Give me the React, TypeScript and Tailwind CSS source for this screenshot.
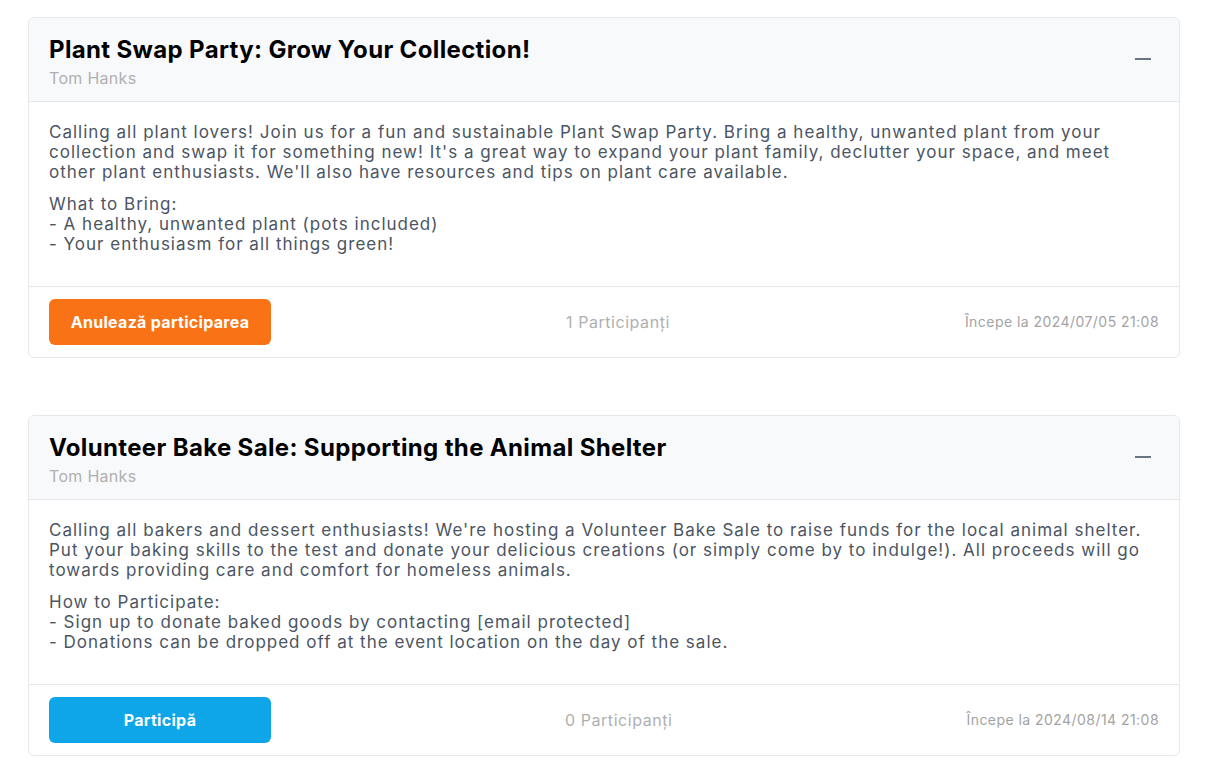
const events = [
  {
    title: "Plant Swap Party: Grow Your Collection!",
    author: "Tom Hanks",
    paragraphs: [
      [
        "Calling all plant lovers! Join us for a fun and sustainable Plant Swap Party. Bring a healthy, unwanted plant from your collection and swap it for something new! It's a great way to expand your plant family, declutter your space, and meet other plant enthusiasts. We'll also have resources and tips on plant care available.",
      ],
      ["What to Bring:", "- A healthy, unwanted plant (pots included)", "- Your enthusiasm for all things green!"],
    ],
    joined: true,
    participants: 1,
    starts: "2024/07/05 21:08",
  },
  {
    title: "Volunteer Bake Sale: Supporting the Animal Shelter",
    author: "Tom Hanks",
    paragraphs: [
      [
        "Calling all bakers and dessert enthusiasts! We're hosting a Volunteer Bake Sale to raise funds for the local animal shelter. Put your baking skills to the test and donate your delicious creations (or simply come by to indulge!). All proceeds will go towards providing care and comfort for homeless animals.",
      ],
      [
        "How to Participate:",
        "- Sign up to donate baked goods by contacting [email protected]",
        "- Donations can be dropped off at the event location on the day of the sale.",
      ],
    ],
    joined: false,
    participants: 0,
    starts: "2024/08/14 21:08",
  },
];

export default function App() {
  return (
    <div className="min-h-screen bg-white px-7 pt-[17px] font-['Inter',sans-serif]">
      <div className="flex flex-col gap-[57px]">
        {events.map((ev) => (
          <div key={ev.title} className="rounded-md border border-[#e5e7eb] bg-white overflow-hidden">
            {/* header */}
            <div className="flex items-center justify-between border-b border-[#e5e7eb] bg-[#f8f9fb] px-5 pt-4 pb-[11px]">
              <div>
                <h2 className="text-2xl leading-8 font-bold tracking-[0.35px] text-black">{ev.title}</h2>
                <p className="text-base leading-6 tracking-[0.3px] text-[#b0b0b0]">{ev.author}</p>
              </div>
              <div className="mr-[8px] mb-[6px] h-[2px] w-4 bg-[#6b7280]" />
            </div>

            {/* body */}
            <div className="px-5 pt-5 pb-8 text-[17px] leading-5 tracking-[1px] text-[#4b5563]">
              {ev.paragraphs.map((lines, i) => (
                <p key={i} className={i > 0 ? "mt-3" : ""}>
                  {lines.map((l, j) => (
                    <span key={j} className="block">
                      {l}
                    </span>
                  ))}
                </p>
              ))}
            </div>

            {/* footer */}
            <div className="flex items-center justify-between border-t border-[#e5e7eb] px-5 py-3">
              <button
                className={`h-[46px] w-[222px] rounded-md text-base font-bold tracking-[0.3px] text-white ${
                  ev.joined ? "bg-[#f97316]" : "bg-[#0ea5e9]"
                }`}
              >
                {ev.joined ? "Anulează participarea" : "Participă"}
              </button>
              <span className="text-base tracking-[0.55px] text-[#b0b0b0]">{ev.participants} Participanți</span>
              <span className="text-sm tracking-[0.45px] text-[#a3a3a3]">Începe la {ev.starts}</span>
            </div>
          </div>
        ))}
      </div>
    </div>
  );
}
